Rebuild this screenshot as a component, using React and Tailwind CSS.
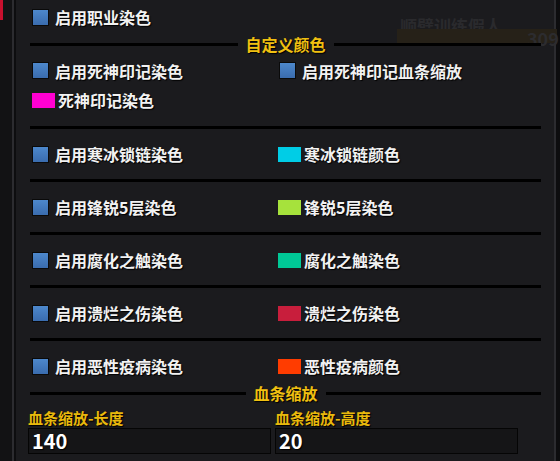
import React from 'react';

const font = { fontFamily: '"Noto Sans CJK SC", "Noto Sans", sans-serif' };

function Check({ label }) {
    return (
        <div className="flex items-center gap-[6px]">
            <div className="w-[17px] h-[17px] border border-[#0a0a0a] bg-gradient-to-b from-[#4d88cc] to-[#3a6cae]" />
            <span className="text-[16px] font-bold text-[#f2f2f2] [text-shadow:1px_1px_1px_#000]">{label}</span>
        </div>
    );
}

function Swatch({ color, label }) {
    return (
        <div className="flex items-center gap-[3px]">
            <div className={`w-[23px] h-[15px] ${color}`} />
            <span className="text-[16px] font-bold text-[#f2f2f2] [text-shadow:1px_1px_1px_#000]">{label}</span>
        </div>
    );
}

function Title({ text }) {
    return (
        <div className="flex items-center gap-[8px] h-[20px]">
            <div className="flex-1 h-[3px] bg-black" />
            <span className="text-[16px] font-bold text-[#f0c011] [text-shadow:1px_1px_1px_#000] leading-none">{text}</span>
            <div className="flex-1 h-[3px] bg-black" />
        </div>
    );
}

const pairs = [
    { check: '启用寒冰锁链染色', color: 'bg-[#00cde6]', label: '寒冰锁链颜色' },
    { check: '启用锋锐5层染色', color: 'bg-[#a6e23c]', label: '锋锐5层染色' },
    { check: '启用腐化之触染色', color: 'bg-[#00c896]', label: '腐化之触染色' },
    { check: '启用溃烂之伤染色', color: 'bg-[#c81e3c]', label: '溃烂之伤染色' },
    { check: '启用恶性疫病染色', color: 'bg-[#ff3c00]', label: '恶性疫病颜色' },
];

export default function App() {
    return (
        <div className="w-[560px] h-[461px] bg-[#121214] flex overflow-hidden" style={font}>
            {/* left strip */}
            <div className="w-[12px] flex flex-col">
                <div className="w-[3px] h-[20px] bg-[#c8102e]" />
            </div>
            <div className="w-[2px] bg-[#2c2c30]" />
            <div className="w-[2px] bg-[#0d0d0f]" />

            {/* --- PANEL --- */}
            <div className="relative flex-1 bg-[#1b1b1e] pl-[14px] pr-[13px]">
                {/* faint scene behind */}
                <div className="absolute left-[384px] top-[13px] text-[17px] font-bold text-[#2a2a2d] pointer-events-none">顺劈训练假人</div>
                <div className="absolute left-[381px] top-[29px] w-[160px] h-[14px] bg-[#262118] pointer-events-none" />
                <div className="absolute left-[511px] top-[25px] text-[18px] font-bold text-[#2c2c2f] pointer-events-none">309</div>

                <div className="relative flex flex-col">
                    <div className="h-[34px] flex items-center pl-[2px]">
                        <Check label="启用职业染色" />
                    </div>

                    <Title text="自定义颜色" />

                    <div className="h-[33px] grid grid-cols-[248px_1fr] items-center">
                        <div className="pl-[2px]"><Check label="启用死神印记染色" /></div>
                        <div className="pl-[1px]"><Check label="启用死神印记血条缩放" /></div>
                    </div>
                    <div className="h-[26px] mb-[13px] flex items-center pl-[2px]">
                        <Swatch color="bg-[#ff00d2]" label="死神印记染色" />
                    </div>

                    {pairs.map((p, i) => (
                        <React.Fragment key={i}>
                            <div className="h-[3px] bg-black" />
                            <div className={`grid grid-cols-[248px_1fr] items-center ${i === pairs.length - 1 ? 'h-[42px] pt-[8px]' : 'h-[50px]'}`}>
                                <div className="pl-[2px]"><Check label={p.check} /></div>
                                <div><Swatch color={p.color} label={p.label} /></div>
                            </div>
                        </React.Fragment>
                    ))}

                    <Title text="血条缩放" />

                    <div className="grid grid-cols-[243px_243px] gap-[4px] -ml-[2px] mt-[5px]">
                        <div className="flex flex-col">
                            <span className="text-[15px] font-bold text-[#e9b90c] leading-[19px] [text-shadow:1px_1px_1px_#000]">血条缩放-长度</span>
                            <div className="mt-[1px] h-[26px] bg-[#151517] border border-[#050505] flex items-center pl-[3px]">
                                <span className="text-[20px] font-bold text-white leading-none [text-shadow:1px_1px_1px_#000]">140</span>
                            </div>
                        </div>
                        <div className="flex flex-col">
                            <span className="text-[15px] font-bold text-[#e9b90c] leading-[19px] [text-shadow:1px_1px_1px_#000]">血条缩放-高度</span>
                            <div className="mt-[1px] h-[26px] bg-[#151517] border border-[#050505] flex items-center pl-[3px]">
                                <span className="text-[20px] font-bold text-white leading-none [text-shadow:1px_1px_1px_#000]">20</span>
                            </div>
                        </div>
                    </div>
                </div>
            </div>

            <div className="w-[2px] bg-[#2c2c30]" />
            <div className="w-[4px] bg-[#0d0d0f]" />
        </div>
    );
}
